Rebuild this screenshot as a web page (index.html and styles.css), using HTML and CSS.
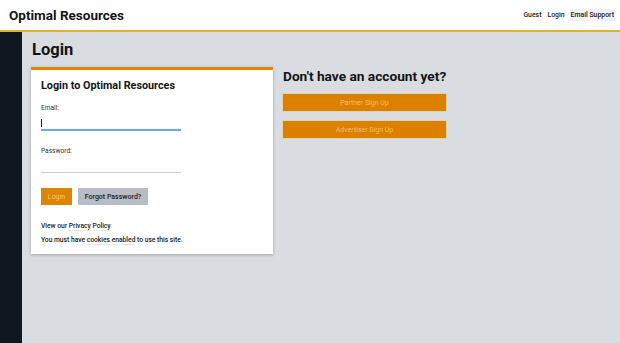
FILE: index.html
```html
<!DOCTYPE html>
<html lang="en">
<head>
<meta charset="UTF-8">
<meta name="viewport" content="width=device-width, initial-scale=1.0">
<title>Optimal Resources - Login</title>
<link rel="stylesheet" href="styles.css">
</head>
<body>
    <header class="topbar">
        <div class="brand">Optimal Resources</div>
        <nav class="nav">
            <a href="#">Guest</a>
            <a href="#">Login</a>
            <a href="#" class="nav-support">Email Support</a>
        </nav>
    </header>
    <div class="layout">
        <aside class="sidebar"></aside>
        <main class="main">
            <h1 class="page-title">Login</h1>
            <div class="columns">
                <div class="card">
                    <h2 class="card-title">Login to Optimal Resources</h2>
                    <form class="form">
                        <label class="field">
                            <span class="label">Email:</span>
                            <span class="input focused"><span class="caret"></span></span>
                        </label>
                        <label class="field">
                            <span class="label">Password:</span>
                            <span class="input"></span>
                        </label>
                        <div class="actions">
                            <button type="button" class="btn btn-primary">Login</button>
                            <button type="button" class="btn btn-gray">Forgot Password?</button>
                        </div>
                    </form>
                    <p class="note note-first">View our <a href="#">Privacy Policy</a></p>
                    <p class="note">You must have <a href="#">cookies enabled</a> to use this site.</p>
                </div>
                <div class="signup">
                    <h2 class="signup-title">Don't have an account yet?</h2>
                    <button type="button" class="btn btn-wide">Partner Sign Up</button>
                    <button type="button" class="btn btn-wide">Advertiser Sign Up</button>
                </div>
            </div>
        </main>
    </div>
</body>
</html>
```

FILE: styles.css
```css
/* base */
body {
    margin: 0;
    font-family: Roboto, "Liberation Sans", Arial, sans-serif;
    color: #111;
    background: #d9dce1;
    height: 343px;
    display: flex;
    flex-direction: column;
    overflow: hidden;
}
a {
    color: inherit;
    text-decoration: none;
}
/* top bar */
.topbar {
    height: 30px;
    background: #fff;
    border-bottom: 2px solid #e9b320;
    display: flex;
    align-items: center;
    justify-content: space-between;
    padding: 0 5px 0 9px;
    flex-shrink: 0;
}
.brand {
    font-size: 13.5px;
    font-weight: 700;
    color: #151515;
}
.nav {
    display: flex;
    gap: 4px;
    font-size: 6.9px;
    font-weight: 500;
}
.nav a {
    padding: 2px 1px;
    color: #222;
}
.nav-support {
    background: #f1f2f4;
}
/* layout */
.layout {
    flex: 1;
    display: flex;
}
.sidebar {
    width: 22px;
    background: #111720;
    flex-shrink: 0;
}
.main {
    flex: 1;
    padding: 0 9px;
}
.page-title {
    margin: 9px 0 8px 1px;
    font-size: 16.5px;
    font-weight: 700;
    line-height: 18px;
    color: #141414;
}
.columns {
    display: flex;
    gap: 10px;
    align-items: flex-start;
}
/* card */
.card {
    width: 222px;
    background: #fff;
    border-top: 3px solid #dd8400;
    padding: 9px 10px 10px;
    box-shadow: 0 1px 3px rgba(0, 0, 0, 0.25);
}
.card-title {
    margin: 0 0 12px;
    font-size: 10.8px;
    font-weight: 700;
    line-height: 13px;
    color: #151515;
}
.field {
    display: block;
    margin-bottom: 16px;
}
.label {
    display: block;
    font-size: 6.6px;
    color: #333;
    line-height: 8px;
}
.input {
    display: block;
    width: 140px;
    height: 13px;
    margin-top: 4px;
    border-bottom: 1px solid #c9ced6;
    position: relative;
}
.input.focused {
    border-bottom: 2px solid #6aa8f5;
}
.caret {
    position: absolute;
    left: 0;
    top: 3px;
    width: 1px;
    height: 8px;
    background: #222;
}
.actions {
    display: flex;
    gap: 6px;
    margin-top: -1px;
}
.btn {
    font-family: inherit;
    border: none;
    height: 17px;
    font-size: 7px;
    padding: 0;
    cursor: pointer;
}
.btn-primary {
    background: #dd8400;
    color: #f6c77c;
    width: 31px;
}
.btn-gray {
    background: #b8bcc3;
    color: #1d1d1d;
    font-weight: 500;
    width: 70px;
}
.note {
    margin: 6px 0 0;
    font-size: 6.7px;
    line-height: 8px;
    font-weight: 500;
    color: #1b1b1b;
}
.note-first {
    margin-top: 17px;
}
.note a {
    border-bottom: 1px solid #e5e7eb;
}
/* sign up column */
.signup {
    width: 163px;
}
.signup-title {
    margin: 0 0 9px;
    font-size: 13.7px;
    font-weight: 700;
    line-height: 18px;
    color: #141414;
    white-space: nowrap;
}
.btn-wide {
    display: block;
    width: 163px;
    background: #dd8000;
    color: #f4bd74;
    margin-bottom: 10px;
    box-shadow: 0 0 0 1px rgba(240, 200, 80, 0.4);
}
```
